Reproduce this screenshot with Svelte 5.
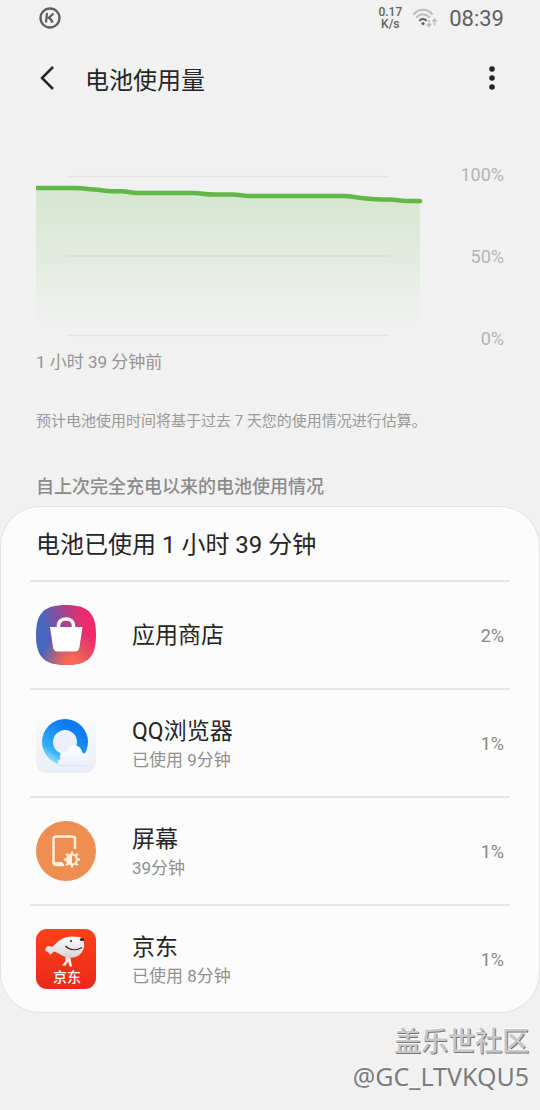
<script lang="ts">
	type App = {
		name: string;
		detail: string;
		percent: number;
		icon: string;
	};

	const apps: App[] = [
		{ name: '应用商店', detail: '', percent: 2, icon: 'store' },
		{ name: 'QQ浏览器', detail: '已使用 9分钟', percent: 1, icon: 'browser' },
		{ name: '屏幕', detail: '39分钟', percent: 1, icon: 'screen' },
		{ name: '京东', detail: '已使用 8分钟', percent: 1, icon: 'jd' }
	];

	const levels = [100, 50, 0];

	// battery level over time, in chart units
	const line =
		'M0 22H40C48 22 54 23.500 62 23.800C68 24.500 70 25.300 76 25.300H86C92 25.300 94 27 102 27H158C166 27 168 28.500 178 28.500H196C204 28.500 206 30 214 30H308C316 30 320 32 328 32.200C336 33 338 33.500 346 33.500H354C362 33.500 362 35 370 35H384';
</script>

<div class="screen">
	<div class="status">
		<svg class="badge" viewBox="0 0 22 22" aria-hidden="true">
			<circle cx="11" cy="11" r="9.500" />
			<path d="M8 6 7 15.500M14.500 6.500 9 11.500M10 10 13.800 15.500" />
		</svg>
		<div class="speed">
			<span>0.17</span>
			<span>K/s</span>
		</div>
		<svg class="wifi" viewBox="0 0 26 20" aria-hidden="true">
			<path class="faint" d="M1.500 6.500C7 .2 15 .2 20.500 6.500M4.300 9.600C8.500 5.200 13.500 5.200 17.700 9.600" />
			<path class="solid" d="M7.300 12.800C9.500 10.300 12.500 10.300 14.700 12.800" />
			<circle cx="11" cy="15.500" r="1.600" />
			<path class="arrows" d="M17 12v6M15 16l2 2.500 2-2.500M22.500 17.500v-6M20.500 13.500l2-2.500 2 2.500" />
		</svg>
		<time>08:39</time>
	</div>

	<header>
		<button class="back" aria-label="返回">
			<svg viewBox="0 0 16 26" aria-hidden="true"><path d="M14 2 3 13 14 24" /></svg>
		</button>
		<h1>电池使用量</h1>
		<button class="more" aria-label="更多选项">
			<svg viewBox="0 0 6 26" aria-hidden="true">
				<circle cx="3" cy="4" r="2.800" />
				<circle cx="3" cy="13" r="2.800" />
				<circle cx="3" cy="22" r="2.800" />
			</svg>
		</button>
	</header>

	<section class="usage">
		<div class="chart">
			<svg viewBox="0 0 390 182" aria-hidden="true">
				<defs>
					<linearGradient id="fill" x1="0" y1="0" x2="0" y2="1">
						<stop offset="0" stop-color="#64b946" stop-opacity="0.200" />
						<stop offset="0.500" stop-color="#64b946" stop-opacity="0.100" />
						<stop offset="1" stop-color="#64b946" stop-opacity="0" />
					</linearGradient>
				</defs>
				<path d="{line}V162H0Z" fill="url(#fill)" />
				<path class="grid" d="M30 10.500H354M30 90H354M30 169.500H354" />
				<path class="level" d={line} />
				<circle cx="384" cy="35" r="2.250" fill="#62b847" />
			</svg>
			<div class="axis">
				{#each levels as level}
					<span>{level}%</span>
				{/each}
			</div>
		</div>
		<p class="since">1 小时 39 分钟前</p>
		<p class="note">预计电池使用时间将基于过去 7 天您的使用情况进行估算。</p>
	</section>

	<h2>自上次完全充电以来的电池使用情况</h2>

	<section class="card">
		<h3>电池已使用 1 小时 39 分钟</h3>
		<ul>
			{#each apps as app}
				<li>
					<svg class="icon" viewBox="0 0 60 60" aria-hidden="true">
						{#if app.icon === 'store'}
							<defs>
								<linearGradient id="store" x1="0" y1="0.500" x2="1" y2="0.300">
									<stop offset="0.150" stop-color="#4766bd" />
									<stop offset="0.500" stop-color="#a04592" />
									<stop offset="0.850" stop-color="#f02a6b" />
								</linearGradient>
								<radialGradient id="glow" cx="0.600" cy="1" r="0.550">
									<stop offset="0.200" stop-color="#f8694f" />
									<stop offset="1" stop-color="#f8694f" stop-opacity="0" />
								</radialGradient>
							</defs>
							<path d="M30 0C52 0 60 8 60 30S52 60 30 60 0 52 0 30 8 0 30 0Z" fill="url(#store)" />
							<path d="M30 0C52 0 60 8 60 30S52 60 30 60 0 52 0 30 8 0 30 0Z" fill="url(#glow)" />
							<path d="M14 22H46.500L43.500 42Q43 46.500 38.500 46.500H22Q17.500 46.500 17 42Z" fill="#fff" />
							<path d="M22.500 23V21C22.500 11.500 37.500 11.500 37.500 21V23" fill="none" stroke="#fff" stroke-width="3.500" />
						{:else if app.icon === 'browser'}
							<defs>
								<linearGradient id="tile" x1="0" y1="0" x2="0" y2="1">
									<stop offset="0" stop-color="#fcfcfd" />
									<stop offset="1" stop-color="#e9eef6" />
								</linearGradient>
								<linearGradient id="ring" x1="0.200" y1="1" x2="0.700" y2="0.200">
									<stop offset="0" stop-color="#b5edff" />
									<stop offset="0.300" stop-color="#36b0fa" />
									<stop offset="0.650" stop-color="#1c93f7" />
									<stop offset="1" stop-color="#0d7af0" />
								</linearGradient>
								<linearGradient id="cloud" x1="0" y1="0" x2="0" y2="1">
									<stop offset="0" stop-color="#fff" />
									<stop offset="1" stop-color="#e8eff9" />
								</linearGradient>
							</defs>
							<rect width="60" height="60" rx="11" fill="url(#tile)" />
							<circle cx="29" cy="29" r="23" fill="url(#ring)" />
							<circle cx="29" cy="29" r="12" fill="#edf0f8" />
							<path d="M27 52.500H46C55 52.500 55 40.500 46.500 40C45 30.500 32.500 30 31 39C25 37 22.500 43 24.500 46C20 47.500 21 52.500 27 52.500Z" fill="url(#cloud)" />
							<path d="M22 52.800H51" stroke="#d4deed" stroke-width="0.800" />
						{:else if app.icon === 'screen'}
							<circle cx="30" cy="30" r="30" fill="#ee8f51" />
							<path d="M28 44H20.500Q17.500 44 17.500 41V18Q17.500 15.500 20.500 15.500H36Q39 15.500 39 18V28" fill="none" stroke="#fff1df" stroke-width="2.500" />
							<path d="M17 41H26L28.500 45H20Q17 45 17 41Z" fill="#fff1df" />
							<g fill="none" stroke="#fff1df" stroke-width="2.200">
								<circle cx="36" cy="38.500" r="5" />
								<path d="M36 30.500V33M36 44V46.500M28 38.500H30.500M41.500 38.500H44M30.300 32.800 32 34.500M40 42.500 41.700 44.200M30.300 44.200 32 42.500M40 34.500 41.700 32.800" />
							</g>
							<path d="M36 33.500A5 5 0 0 0 36 43.500Z" fill="#fff1df" />
						{:else}
							<defs>
								<linearGradient id="red" x1="0" y1="0" x2="0" y2="1">
									<stop offset="0" stop-color="#fc4219" />
									<stop offset="1" stop-color="#e9291a" />
								</linearGradient>
								<linearGradient id="dog" x1="0" y1="0" x2="0" y2="1">
									<stop offset="0" stop-color="#fff" />
									<stop offset="1" stop-color="#d5d2d2" />
								</linearGradient>
							</defs>
							<rect width="60" height="60" rx="11" fill="url(#red)" />
							<path d="M9.500 22C9 18 12 15.500 16 18C21 14 25 8 35 7.500L43 8C48 9 49 15 47.500 20C44 29 35 30.500 27 27C23 25 21 23 18 22.500L14 26C13 24 13 23 9.500 22Z" fill="url(#dog)" />
							<path d="M29.500 28 34.500 29 36 37.500H33.800L32 32.500 29.500 36.500 26 36.500 29.500 32Z" fill="#f4efee" />
							<path d="M29.500 17C34 22 41 21.500 46 18.500" fill="none" stroke="#332a2a" stroke-width="1.200" />
							<circle cx="35" cy="12" r="1.100" fill="#332a2a" />
							<ellipse cx="46" cy="10.500" rx="2.200" ry="1.600" fill="#332a2a" />
							<text x="31" y="53" text-anchor="middle">京东</text>
						{/if}
					</svg>
					<div class="info">
						<span class="name">{app.name}</span>
						{#if app.detail}
							<span class="detail">{app.detail}</span>
						{/if}
					</div>
					<span class="percent">{app.percent}%</span>
				</li>
			{/each}
		</ul>
	</section>

	<footer>
		<span class="site">盖乐世社区</span>
		<span class="user">@GC_LTVKQU5</span>
	</footer>
</div>

<style>
	:global(body) {
		margin: 0;
		background: #f1f1f1;
	}

	.screen {
		font-family: Roboto, 'Noto Sans CJK SC', sans-serif;
		color: #252525;
		background: #f1f1f1;
	}

	h1,
	h2,
	h3,
	p,
	ul {
		margin: 0;
		padding: 0;
		font-weight: 400;
	}

	.status {
		display: flex;
		align-items: center;
		height: 36px;
		padding: 0 36px;
		color: #606060;
	}

	.badge {
		width: 22px;
		height: 22px;
		margin: 0 auto 0 3px;
		fill: none;
		stroke: #606060;
		stroke-width: 2.3;
	}

	.speed {
		display: flex;
		flex-direction: column;
		align-items: center;
		font-size: 12px;
		font-weight: 500;
		line-height: 12px;
	}

	.wifi {
		width: 26px;
		height: 20px;
		margin: 0 11px 0 10px;
		fill: none;
		stroke-width: 2;
	}

	.wifi circle {
		fill: #606060;
	}

	.faint {
		stroke: #bcbcbc;
	}

	.solid {
		stroke: #606060;
	}

	.arrows {
		stroke: #bcbcbc;
		stroke-width: 1.5;
	}

	time {
		font-size: 22px;
	}

	header {
		display: flex;
		align-items: center;
		height: 84px;
		padding: 0 36px;
	}

	button {
		display: flex;
		padding: 0;
		border: none;
		background: none;
		cursor: pointer;
	}

	.back {
		width: 49px;
		padding-left: 3px;
	}

	.back svg {
		width: 16px;
		height: 26px;
		fill: none;
		stroke: #252525;
		stroke-width: 2.5;
	}

	.more {
		margin-left: auto;
		padding: 0 9px;
	}

	.more svg {
		width: 6px;
		height: 26px;
		fill: #252525;
	}

	h1 {
		font-size: 24px;
	}

	.usage {
		padding: 46px 36px 0;
	}

	.chart {
		display: flex;
		gap: 12px;
	}

	.chart svg {
		flex: 1;
		min-width: 0;
	}

	.grid {
		stroke: #000;
		stroke-opacity: 0.05;
		stroke-width: 1.5;
	}

	.level {
		fill: none;
		stroke: #62b847;
		stroke-width: 4.5;
	}

	.axis {
		display: flex;
		flex-direction: column;
		justify-content: space-between;
		width: 66px;
		font-size: 18px;
		line-height: 18px;
		text-align: right;
		color: #b4b4b4;
	}

	.since {
		margin-top: 2px;
		font-size: 17px;
		line-height: 24px;
		color: #949494;
	}

	.note {
		margin-top: 36px;
		font-size: 15px;
		line-height: 22px;
		color: #999;
	}

	h2 {
		padding: 43px 36px 7px;
		font-size: 18px;
		font-weight: 500;
		line-height: 24px;
		color: #8b8b8b;
	}

	.card {
		padding: 0 29px;
		border: 1px solid #e2e2e2;
		border-radius: 40px;
		background: #fcfcfc;
	}

	h3 {
		padding: 3px 6px 0;
		font-size: 24px;
		line-height: 70px;
	}

	ul {
		list-style: none;
	}

	li {
		display: flex;
		align-items: center;
		box-sizing: border-box;
		height: 108px;
		padding: 0 6px;
		border-top: 2px solid #e6e6e6;
	}

	.icon {
		width: 60px;
		height: 60px;
		margin-right: 36px;
	}

	.icon text {
		font-size: 14px;
		font-weight: 500;
		fill: #fff;
	}

	.info {
		display: flex;
		flex: 1;
		flex-direction: column;
	}

	.name {
		padding-top: 2px;
		font-size: 23px;
		line-height: 32px;
	}

	.detail {
		font-size: 17px;
		line-height: 24px;
		color: #909090;
	}

	.percent {
		font-size: 18px;
		color: #888;
	}

	footer {
		display: flex;
		flex-direction: column;
		align-items: flex-end;
		padding: 11px 11px 16px;
	}

	.site {
		font-size: 27px;
		font-weight: 500;
		line-height: 36px;
		color: #c8c8c8;
		text-shadow: 1px 1px 0 #777, -1px -1px 0 #fafafa;
	}

	.user {
		font-family: 'Noto Sans', sans-serif;
		font-size: 25px;
		line-height: 32px;
		color: #7c7c7c;
		text-shadow: -1px -1px 0 #fafafa;
	}
</style>
